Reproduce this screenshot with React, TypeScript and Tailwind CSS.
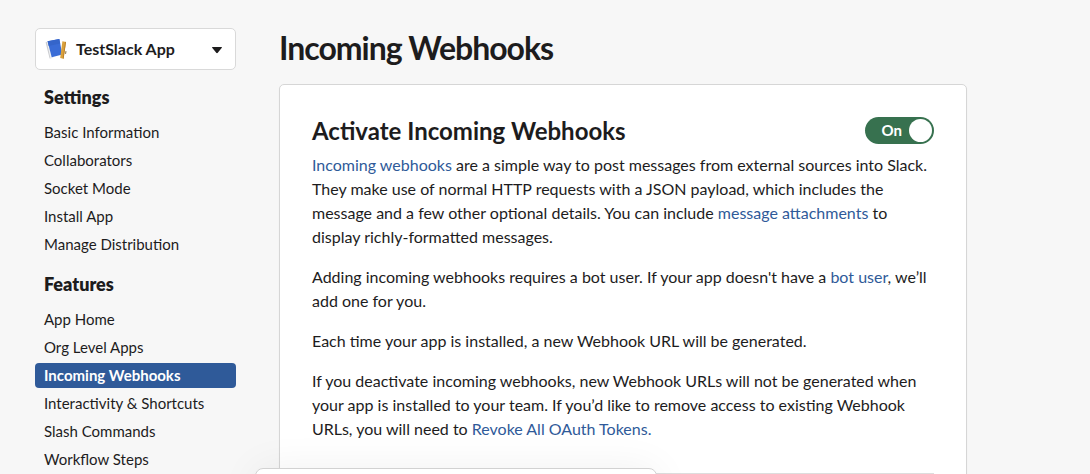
const sections = [
  {
    title: 'Settings',
    items: ['Basic Information', 'Collaborators', 'Socket Mode', 'Install App', 'Manage Distribution'],
  },
  {
    title: 'Features',
    items: [
      'App Home',
      'Org Level Apps',
      'Incoming Webhooks',
      'Interactivity & Shortcuts',
      'Slash Commands',
      'Workflow Steps',
    ],
  },
];

const active = 'Incoming Webhooks';

function AppIcon() {
  return (
    <svg width="22" height="22" viewBox="0 0 22 22" className="shrink-0">
      <path d="M0.6 4.2 L3 3.4 L7 20 L4.6 20.5 Z" fill="#c9cbcf" />
      <path d="M1.8 4 L4 3.4 L8.5 19.5 L5.5 20.5 Z" fill="#eef0f2" />
      <path d="M2.6 3.2 L14.3 0.9 L17.4 16.5 L6.7 19.2 Z" fill="#3a6cd6" />
      <path d="M2.6 3.2 L14.3 0.9 L15.2 5.4 L3.7 8 Z" fill="#3565ca" />
      <path d="M17.4 3.2 L21 4 L18.6 20.8 L15.2 20 Z" fill="#d9a13c" />
      <path d="M20.2 3.8 L21 4 L18.6 20.8 L17.8 20.6 Z" fill="#b97d24" />
      <path d="M20.5 13 L21.5 13.2 L21 16 L20 15.8 Z" fill="#8b7448" />
    </svg>
  );
}

function Sidebar() {
  return (
    <aside className="w-[201px] shrink-0">
      <button className="flex h-[42px] w-full items-center rounded-[5px] border border-[#d9d9d9] bg-white pr-3 pl-[9px]">
        <AppIcon />
        <span className="ml-[9px] text-[16px] font-bold">TestSlack App</span>
        <svg width="12" height="8" viewBox="0 0 12 8" className="mt-[2px] ml-auto">
          <path d="M1.6 1 H10.4 Q11.4 1 10.8 1.8 L6.8 6.8 Q6 7.6 5.2 6.8 L1.2 1.8 Q0.6 1 1.6 1 Z" fill="#1d1c1d" />
        </svg>
      </button>
      {sections.map((section) => (
        <nav key={section.title} className="pt-[15px]">
          <h4 className="mb-[11px] pl-[9px] text-[18px] leading-6 font-extrabold">{section.title}</h4>
          <ul className="flex flex-col gap-[3px]">
            {section.items.map((item) => (
              <li
                key={item}
                className={
                  item === active
                    ? 'h-[25px] rounded-[4px] bg-[#2f5a99] pl-[9px] text-[15px] leading-[25px] font-bold text-white'
                    : 'h-[25px] pl-[9px] text-[15px] leading-[25px]'
                }
              >
                {item}
              </li>
            ))}
          </ul>
        </nav>
      ))}
    </aside>
  );
}

function Toggle() {
  return (
    <div className="flex h-[27px] w-[69px] items-center justify-end rounded-full bg-[#37714f] pr-[2px]">
      <span className="mr-[7px] text-[15px] font-bold text-white">On</span>
      <span className="size-[23px] rounded-full bg-white" />
    </div>
  );
}

export default function App() {
  return (
    <div className="relative flex h-[474px] w-[1090px] overflow-hidden bg-[#f7f7f7] pt-7 pl-[35px] font-['Lato',sans-serif] text-[#1d1c1d]">
      <Sidebar />

      <main className="ml-[43px] w-[688px]">
        <h1 className="text-[32px] leading-[40px] font-bold tracking-[-1px] whitespace-nowrap">Incoming Webhooks</h1>
        <div className="mt-4 h-[420px] rounded-[5px] border border-[#d6d6d6] bg-white px-8 pt-8 shadow-[0_1px_1px_rgba(0,0,0,0.08)]">
          <div className="flex h-[27px] items-center justify-between">
            <h2 className="text-[24px] leading-[27px] font-bold">Activate Incoming Webhooks</h2>
            <Toggle />
          </div>
          <div className="mt-[9px] flex flex-col gap-4 text-[16px] leading-6 whitespace-nowrap">
            <p>
              <a className="text-[#2f5a99]">Incoming webhooks</a> are a simple way to post messages from external sources into Slack.
              <br />
              They make use of normal HTTP requests with a JSON payload, which includes the
              <br />
              message and a few other optional details. You can include <a className="text-[#2f5a99]">message attachments</a> to
              <br />
              display richly-formatted messages.
            </p>
            <p>
              Adding incoming webhooks requires a bot user. If your app doesn't have a <a className="text-[#2f5a99]">bot user</a>, we’ll
              <br />
              add one for you.
            </p>
            <p>Each time your app is installed, a new Webhook URL will be generated.</p>
            <p>
              If you deactivate incoming webhooks, new Webhook URLs will not be generated when
              <br />
              your app is installed to your team. If you’d like to remove access to existing Webhook
              <br />
              URLs, you will need to <a className="text-[#2f5a99]">Revoke All OAuth Tokens.</a>
            </p>
          </div>
          <hr className="mt-8 border-[#dddddd]" />
        </div>
      </main>

      {/* Top edge of the floating panel */}
      <div className="absolute top-[468px] left-[255px] h-20 w-[402px] rounded-[8px] border border-[#d2d2d2] bg-white shadow-[0_0_40px_rgba(0,0,0,0.06)]" />
    </div>
  );
}
